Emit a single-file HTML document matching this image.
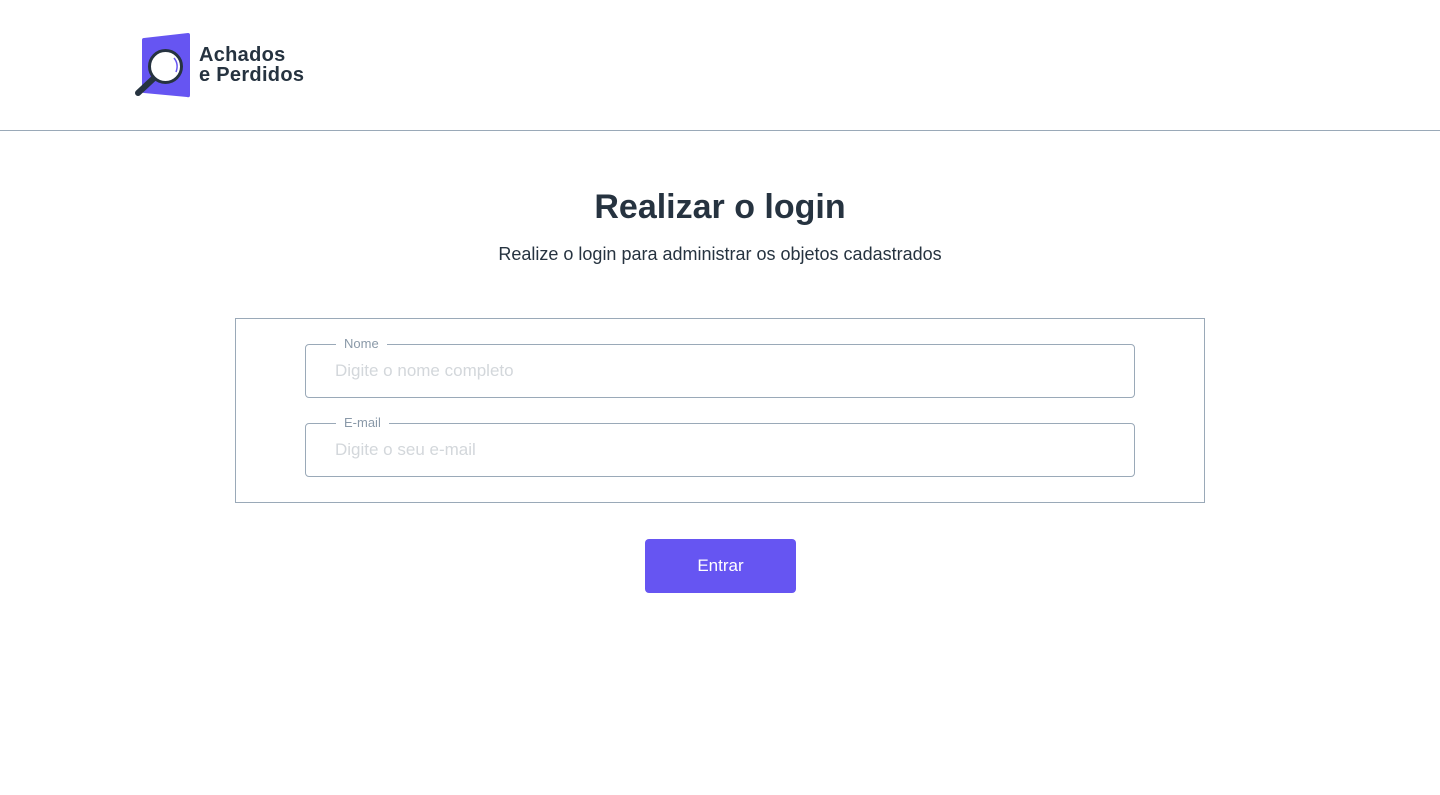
<!DOCTYPE html>
<html><head><meta charset="utf-8"><style>
body{margin:0;width:1440px;height:795px;background:#fff;font-family:"Liberation Sans",Arial,sans-serif;position:relative;overflow:hidden}
.hdr{position:absolute;left:0;top:0;width:1440px;height:130px;border-bottom:1px solid #9aa9b8}
.brand{position:absolute;left:199px;top:45px;font-weight:bold;font-size:20px;line-height:20px;color:#263340;letter-spacing:0.3px}
h1{position:absolute;left:0;width:1440px;top:188px;margin:0;text-align:center;font-size:34px;font-weight:bold;color:#263340}
.sub{position:absolute;left:0;width:1440px;top:244px;text-align:center;font-size:18px;color:#263340}
.box{position:absolute;left:235px;top:318px;width:968px;height:183px;border:1px solid #9aa9b8}
.fld{position:absolute;left:305px;width:828px;height:52px;border:1px solid #9aa9b8;border-radius:4px}
.fld .lb{position:absolute;left:30px;top:-9px;background:#fff;padding:0 8px;font-size:13px;color:#8a99a8}
.fld .ph{position:absolute;left:29px;top:16px;font-size:17px;color:#d3d7db}
.btn{position:absolute;left:645px;top:539px;width:151px;height:54px;background:#6655f2;border-radius:4px;color:#fff;font-size:17px;text-align:center;line-height:54px}
</style></head><body>
<div class="hdr">
<svg style="position:absolute;left:130px;top:30px" width="66" height="72" viewBox="0 0 66 72">
<path d="M14 8 L58 3 Q60 3 60 5 L60 65 Q60 68 57 67 L14 63 Q12 63 12 61 L12 10 Q12 8 14 8Z" fill="#6655f2"/>
<circle cx="35.5" cy="36.5" r="16" fill="#fff" stroke="#263340" stroke-width="3"/>
<path d="M44 28 Q49 34 46 42" stroke="#6655f2" stroke-width="1.5" fill="none"/>
<line x1="23" y1="49" x2="8" y2="63" stroke="#263340" stroke-width="6" stroke-linecap="round"/>
</svg>
<div class="brand">Achados<br>e Perdidos</div>
</div>
<h1>Realizar o login</h1>
<div class="sub">Realize o login para administrar os objetos cadastrados</div>
<div class="box"></div>
<div class="fld" style="top:344px"><span class="lb">Nome</span><span class="ph">Digite o nome completo</span></div>
<div class="fld" style="top:423px"><span class="lb">E-mail</span><span class="ph">Digite o seu e-mail</span></div>
<div class="btn">Entrar</div>
</body></html>
